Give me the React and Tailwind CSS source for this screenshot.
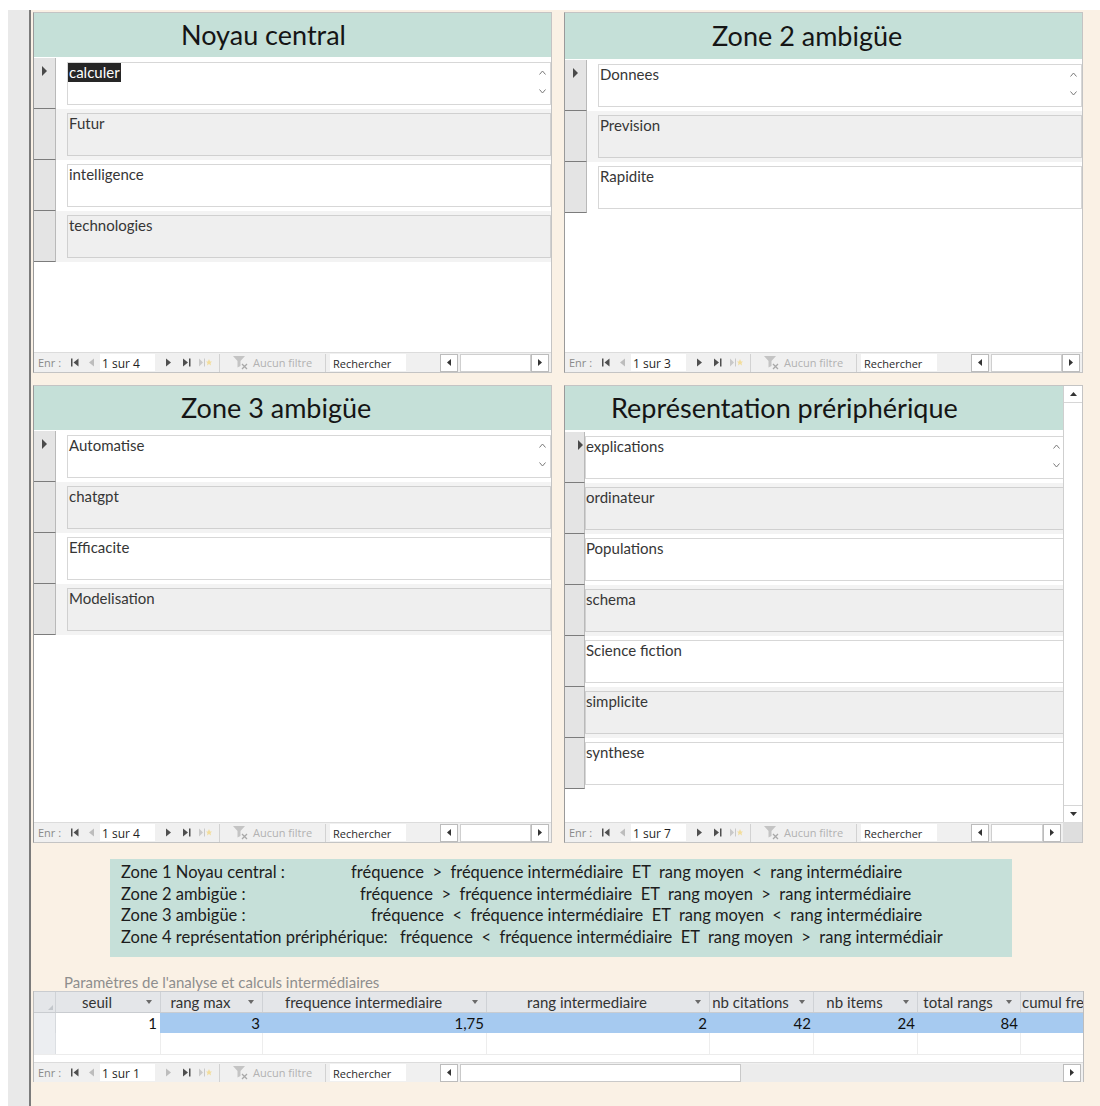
import React from "react";

const TEXT_FONT = "font-['Lato',sans-serif]";

/* ---------- small glyphs ---------- */

function Chevrons() {
  return (
    <div className="absolute right-[4px] top-[7px] flex flex-col gap-[14px]">
      <svg width="7" height="5" viewBox="0 0 7 5">
        <polyline points="0.5,4.5 3.5,1 6.5,4.5" fill="none" stroke="#7a7a7a" strokeWidth="1" />
      </svg>
      <svg width="7" height="5" viewBox="0 0 7 5">
        <polyline points="0.5,0.5 3.5,4 6.5,0.5" fill="none" stroke="#7a7a7a" strokeWidth="1" />
      </svg>
    </div>
  );
}

function RecordArrow() {
  return (
    <svg width="5" height="10" viewBox="0 0 5 10">
      <polygon points="0,0 5,5 0,10" fill="#4a4a4a" />
    </svg>
  );
}

function Funnel() {
  return (
    <svg width="17" height="15" viewBox="0 0 17 15" className="shrink-0">
      <polygon points="1,1 13,1 8.5,6 8.5,11 5.5,12.5 5.5,6" fill="#c4c4c4" />
      <path d="M10 9 L15 14 M15 9 L10 14" stroke="#a9a9a9" strokeWidth="1.3" />
    </svg>
  );
}

function NavBar({ label, nextFaded = false, table = false }) {
  const next = nextFaded ? "#bdbdbd" : "#4f4f4f";
  return (
    <div className="flex h-[20px] shrink-0 items-center bg-[#f0f0f0] border-t border-[#dcdcdc] font-['Open_Sans',sans-serif] text-[11px] leading-none text-[#8a8a8a]">
      <span className="w-[37px] shrink-0 pl-[4px] whitespace-nowrap">Enr :</span>
      <svg width="8" height="9" viewBox="0 0 8 9" className="shrink-0">
        <rect x="0" y="0.5" width="1.5" height="8" fill="#4f4f4f" />
        <polygon points="7.5,0.5 2.5,4.5 7.5,8.5" fill="#4f4f4f" />
      </svg>
      <svg width="5" height="9" viewBox="0 0 5 9" className="ml-[10px] shrink-0">
        <polygon points="5,0.5 0,4.5 5,8.5" fill="#bdbdbd" />
      </svg>
      <div className="ml-[6px] flex h-[17px] w-[55px] shrink-0 items-center bg-white pl-[2px] pt-[2px] text-[12px] text-[#1f1f1f] whitespace-nowrap">
        {label}
      </div>
      <svg width="5" height="9" viewBox="0 0 5 9" className="ml-[11px] shrink-0">
        <polygon points="0,0.5 5,4.5 0,8.5" fill={next} />
      </svg>
      <svg width="8" height="9" viewBox="0 0 8 9" className="ml-[12px] shrink-0">
        <polygon points="0,0.5 5,4.5 0,8.5" fill="#4f4f4f" />
        <rect x="6" y="0.5" width="1.5" height="8" fill="#4f4f4f" />
      </svg>
      <svg width="13" height="9" viewBox="0 0 13 9" className="ml-[8px] shrink-0">
        <polygon points="0,0.5 4,4.5 0,8.5" fill="#c9c9c9" />
        <rect x="5" y="0.5" width="1" height="8" fill="#c9c9c9" />
        <polygon points="10,1 11,3.5 13,3.5 11.5,5 12,7.5 10,6 8,7.5 8.5,5 7,3.5 9,3.5" fill="#f2dd9c" />
      </svg>
      <div className="ml-[7px] h-[18px] w-px shrink-0 bg-[#d2d2d2]" />
      <div className="ml-[12px] shrink-0">
        <Funnel />
      </div>
      <span className="ml-[4px] w-[62px] shrink-0 whitespace-nowrap text-[#b2b2b2]">Aucun filtre</span>
      <div className="ml-[10px] h-[18px] w-px shrink-0 bg-[#d2d2d2]" />
      <div className="ml-[4px] flex h-[17px] w-[76px] shrink-0 items-center bg-white pl-[3px] pt-[2px] text-[#2a2a2a]">
        Rechercher
      </div>
      <div className="w-[34px] shrink-0" />
      <div className="flex h-[18px] w-[18px] shrink-0 items-center justify-center border border-[#bcbcbc] bg-white">
        <svg width="4" height="7" viewBox="0 0 4 7">
          <polygon points="4,0 0,3.5 4,7" fill="#333" />
        </svg>
      </div>
      {table ? (
        <div className="ml-[2px] flex h-[18px] flex-1">
          <div className="h-full w-[281px] border border-[#c9c9c9] bg-white" />
          <div className="h-full flex-1 bg-[#ececec]" />
        </div>
      ) : (
        <div className="ml-[2px] h-[18px] flex-1 border border-[#cfcfcf] bg-white" />
      )}
      <div className="mr-[2px] flex h-[18px] w-[18px] shrink-0 items-center justify-center border border-[#bcbcbc] bg-white">
        <svg width="4" height="7" viewBox="0 0 4 7">
          <polygon points="0,0 4,3.5 0,7" fill="#333" />
        </svg>
      </div>
    </div>
  );
}

/* ---------- form rows ---------- */

function Row({ text, index, selected, tight }) {
  const alt = index % 2 === 1;
  return (
    <div className={`flex h-[51px] shrink-0 ${alt ? "bg-[#f3f3f3]" : "bg-white"}`}>
      <div
        className={`${tight ? "w-[20px] justify-end pr-[1px]" : "w-[22px] justify-center"} flex shrink-0 items-start pt-[8px] bg-[#e4e4e4] border-r border-[#b9b9b9] border-b border-b-[#7c7c7c]`}
      >
        {index === 0 && <RecordArrow />}
      </div>
      <div className={`flex-1 min-w-0 ${tight ? "pl-0" : "pl-[11px]"} pt-[4px]`}>
        <div
          className={`relative h-[43px] border ${
            alt ? "border-[#d0d0d0] bg-[#efefef]" : "border-[#d7d7d7] bg-white"
          } ${tight ? "mr-[-2px]" : ""}`}
        >
          <span
            className={`inline-block align-top ${tight ? "px-0" : "px-[1px]"} text-[15px] leading-[19px] ${
              selected ? "bg-[#262626] text-white" : "text-[#363636]"
            }`}
          >
            {text}
          </span>
          {index === 0 && <Chevrons />}
        </div>
      </div>
    </div>
  );
}

function Panel({ title, items, label, headerH = "h-[44px]" }) {
  return (
    <div className="flex h-full flex-col border border-[#c4c4c4] border-l-[#9a9a9a] bg-white">
      <div className={`${headerH} flex shrink-0 items-center bg-[#c5e0d8] pl-[147px] text-[27px] text-[#151515]`}>
        {title}
      </div>
      <div className="flex flex-1 flex-col pt-[1px]">
        {items.map((t, i) => (
          <Row key={t} text={t} index={i} selected={i === 0 && t === "calculer"} />
        ))}
      </div>
      <NavBar label={label} />
    </div>
  );
}

function ScrollPanel({ title, items, label }) {
  return (
    <div className="flex h-full flex-col border border-[#c4c4c4] border-l-[#9a9a9a] bg-white">
      <div className="flex min-h-0 flex-1">
        <div className="flex min-w-0 flex-1 flex-col overflow-hidden">
          <div className="flex h-[44px] shrink-0 items-center bg-[#c5e0d8] pl-[46px] text-[27px] text-[#151515] whitespace-nowrap">
            {title}
          </div>
          <div className="flex flex-1 flex-col pt-[2px]">
            {items.map((t, i) => (
              <Row key={t} text={t} index={i} tight />
            ))}
          </div>
        </div>
        <div className="flex w-[19px] shrink-0 flex-col border-l border-[#cfcfcf] bg-white">
          <div className="flex h-[17px] items-center justify-center border-b border-[#d6d6d6]">
            <svg width="7" height="4" viewBox="0 0 7 4">
              <polygon points="0,4 3.5,0 7,4" fill="#333" />
            </svg>
          </div>
          <div className="flex-1" />
          <div className="flex h-[17px] items-center justify-center border-t border-[#d6d6d6]">
            <svg width="7" height="4" viewBox="0 0 7 4">
              <polygon points="0,0 3.5,4 7,0" fill="#333" />
            </svg>
          </div>
        </div>
      </div>
      <div className="flex shrink-0">
        <div className="min-w-0 flex-1">
          <NavBar label={label} />
        </div>
        <div className="w-[19px] shrink-0 border-t border-[#dcdcdc] bg-[#dedede]" />
      </div>
    </div>
  );
}

/* ---------- rules box ---------- */

const RULES = [
  {
    label: "Zone 1 Noyau central :",
    w: "w-[230px]",
    rule: "fréquence  >  fréquence intermédiaire  ET  rang moyen  <  rang intermédiaire",
  },
  {
    label: "Zone 2 ambigüe :",
    w: "w-[239px]",
    rule: "fréquence  >  fréquence intermédiaire  ET  rang moyen  >  rang intermédiaire",
  },
  {
    label: "Zone 3 ambigüe :",
    w: "w-[250px]",
    rule: "fréquence  <  fréquence intermédiaire  ET  rang moyen  <  rang intermédiaire",
  },
  {
    label: "Zone 4 représentation prériphérique:",
    w: "w-[279px]",
    rule: "fréquence  <  fréquence intermédiaire  ET  rang moyen  >  rang intermédiair",
  },
];

/* ---------- parameters datasheet ---------- */

const COLS = [
  { label: "seuil", w: "w-[105px]", value: "1", white: true },
  { label: "rang max", w: "w-[102px]", value: "3" },
  { label: "frequence intermediaire", w: "w-[224px]", value: "1,75" },
  { label: "rang intermediaire", w: "w-[223px]", value: "2" },
  { label: "nb citations", w: "w-[104px]", value: "42" },
  { label: "nb items", w: "w-[104px]", value: "24" },
  { label: "total rangs", w: "w-[103px]", value: "84" },
];

function DropMark() {
  return (
    <svg width="6" height="4" viewBox="0 0 6 4">
      <polygon points="0,0 6,0 3,4" fill="#6a6a6a" />
    </svg>
  );
}

function Datasheet() {
  return (
    <div className="flex h-[91px] w-[1051px] flex-col border-x border-[#bdbdbd] bg-white">
      {/* header */}
      <div className="flex h-[22px] shrink-0 border-y border-[#c9ccd0] bg-[#e4e6e9] text-[15px] text-[#333]">
        <div className="flex w-[22px] shrink-0 items-end justify-end border-r border-[#cfd2d6] pb-[2px] pr-[2px]">
          <svg width="5" height="5" viewBox="0 0 5 5">
            <polygon points="5,0 5,5 0,5" fill="#c2c6cb" />
          </svg>
        </div>
        {COLS.map((c) => (
          <div key={c.label} className={`${c.w} flex shrink-0 items-center border-r border-[#cfd2d6]`}>
            <span className="flex-1 text-center whitespace-nowrap">{c.label}</span>
            <span className="flex w-[22px] justify-center">
              <DropMark />
            </span>
          </div>
        ))}
        <div className="min-w-0 flex-1 overflow-hidden whitespace-nowrap pl-[1px] leading-[20px]">
          cumul fre
        </div>
      </div>
      {/* current record */}
      <div className="flex h-[20px] shrink-0 text-[15px] text-[#111]">
        <div className="w-[22px] shrink-0 border-r border-[#d6d9dd] bg-[#eceef1]" />
        {COLS.map((c) => (
          <div
            key={c.label}
            className={`${c.w} shrink-0 pr-[3px] text-right leading-[20px] ${
              c.white ? "bg-white border-r border-[#a6caf0]" : "bg-[#a6caf0]"
            }`}
          >
            {c.value}
          </div>
        ))}
        <div className="flex-1 bg-[#a6caf0]" />
      </div>
      {/* new record */}
      <div className="flex h-[22px] shrink-0 border-b border-[#ececec]">
        <div className="w-[22px] shrink-0 border-r border-[#dcdfe3] bg-[#eceef1]" />
        {COLS.map((c) => (
          <div key={c.label} className={`${c.w} shrink-0 border-r border-[#ededed]`} />
        ))}
        <div className="flex-1" />
      </div>
      <div className="flex-1" />
      <NavBar label="1 sur 1" nextFaded table />
    </div>
  );
}

export default function App() {
  return (
    <div className={`flex h-[1106px] w-[1100px] overflow-hidden bg-white pl-[8px] pt-[10px] ${TEXT_FONT}`}>
      <div className="w-[21px] shrink-0 bg-[#e9e9e9]" />
      <div className="w-[2px] shrink-0 bg-[#7b7b7b]" />
      <div className="flex min-w-0 flex-1 flex-col bg-[#faf1e5] pl-[2px] pt-[2px]">
        <div className="grid grid-cols-[519px_519px] gap-x-[12px] gap-y-[12px] grid-rows-[361px_458px]">
          <Panel
            title="Noyau central"
            items={["calculer", "Futur", "intelligence", "technologies"]}
            label="1 sur 4"
          />
          <Panel
            title="Zone 2 ambigüe"
            items={["Donnees", "Prevision", "Rapidite"]}
            label="1 sur 3"
            headerH="h-[46px]"
          />
          <Panel
            title="Zone 3 ambigüe"
            items={["Automatise", "chatgpt", "Efficacite", "Modelisation"]}
            label="1 sur 4"
          />
          <ScrollPanel
            title="Représentation prériphérique"
            items={[
              "explications",
              "ordinateur",
              "Populations",
              "schema",
              "Science fiction",
              "simplicite",
              "synthese",
            ]}
            label="1 sur 7"
          />
        </div>

        <div className="ml-[77px] mt-[16px] h-[98px] w-[902px] bg-[#c6e0d9] pl-[11px] pt-[3px] text-[16.5px] leading-[21.7px] text-[#1c1c1c]">
          {RULES.map((r) => (
            <div key={r.label} className="flex whitespace-pre">
              <span className={`${r.w} shrink-0`}>{r.label}</span>
              <span>{r.rule}</span>
            </div>
          ))}
        </div>

        <div className="mt-[17px] h-[17px] pl-[31px] text-[15px] leading-[17px] text-[#8e8e8e]">
          Paramètres de l'analyse et calculs intermédiaires
        </div>
        <Datasheet />
      </div>
    </div>
  );
}
